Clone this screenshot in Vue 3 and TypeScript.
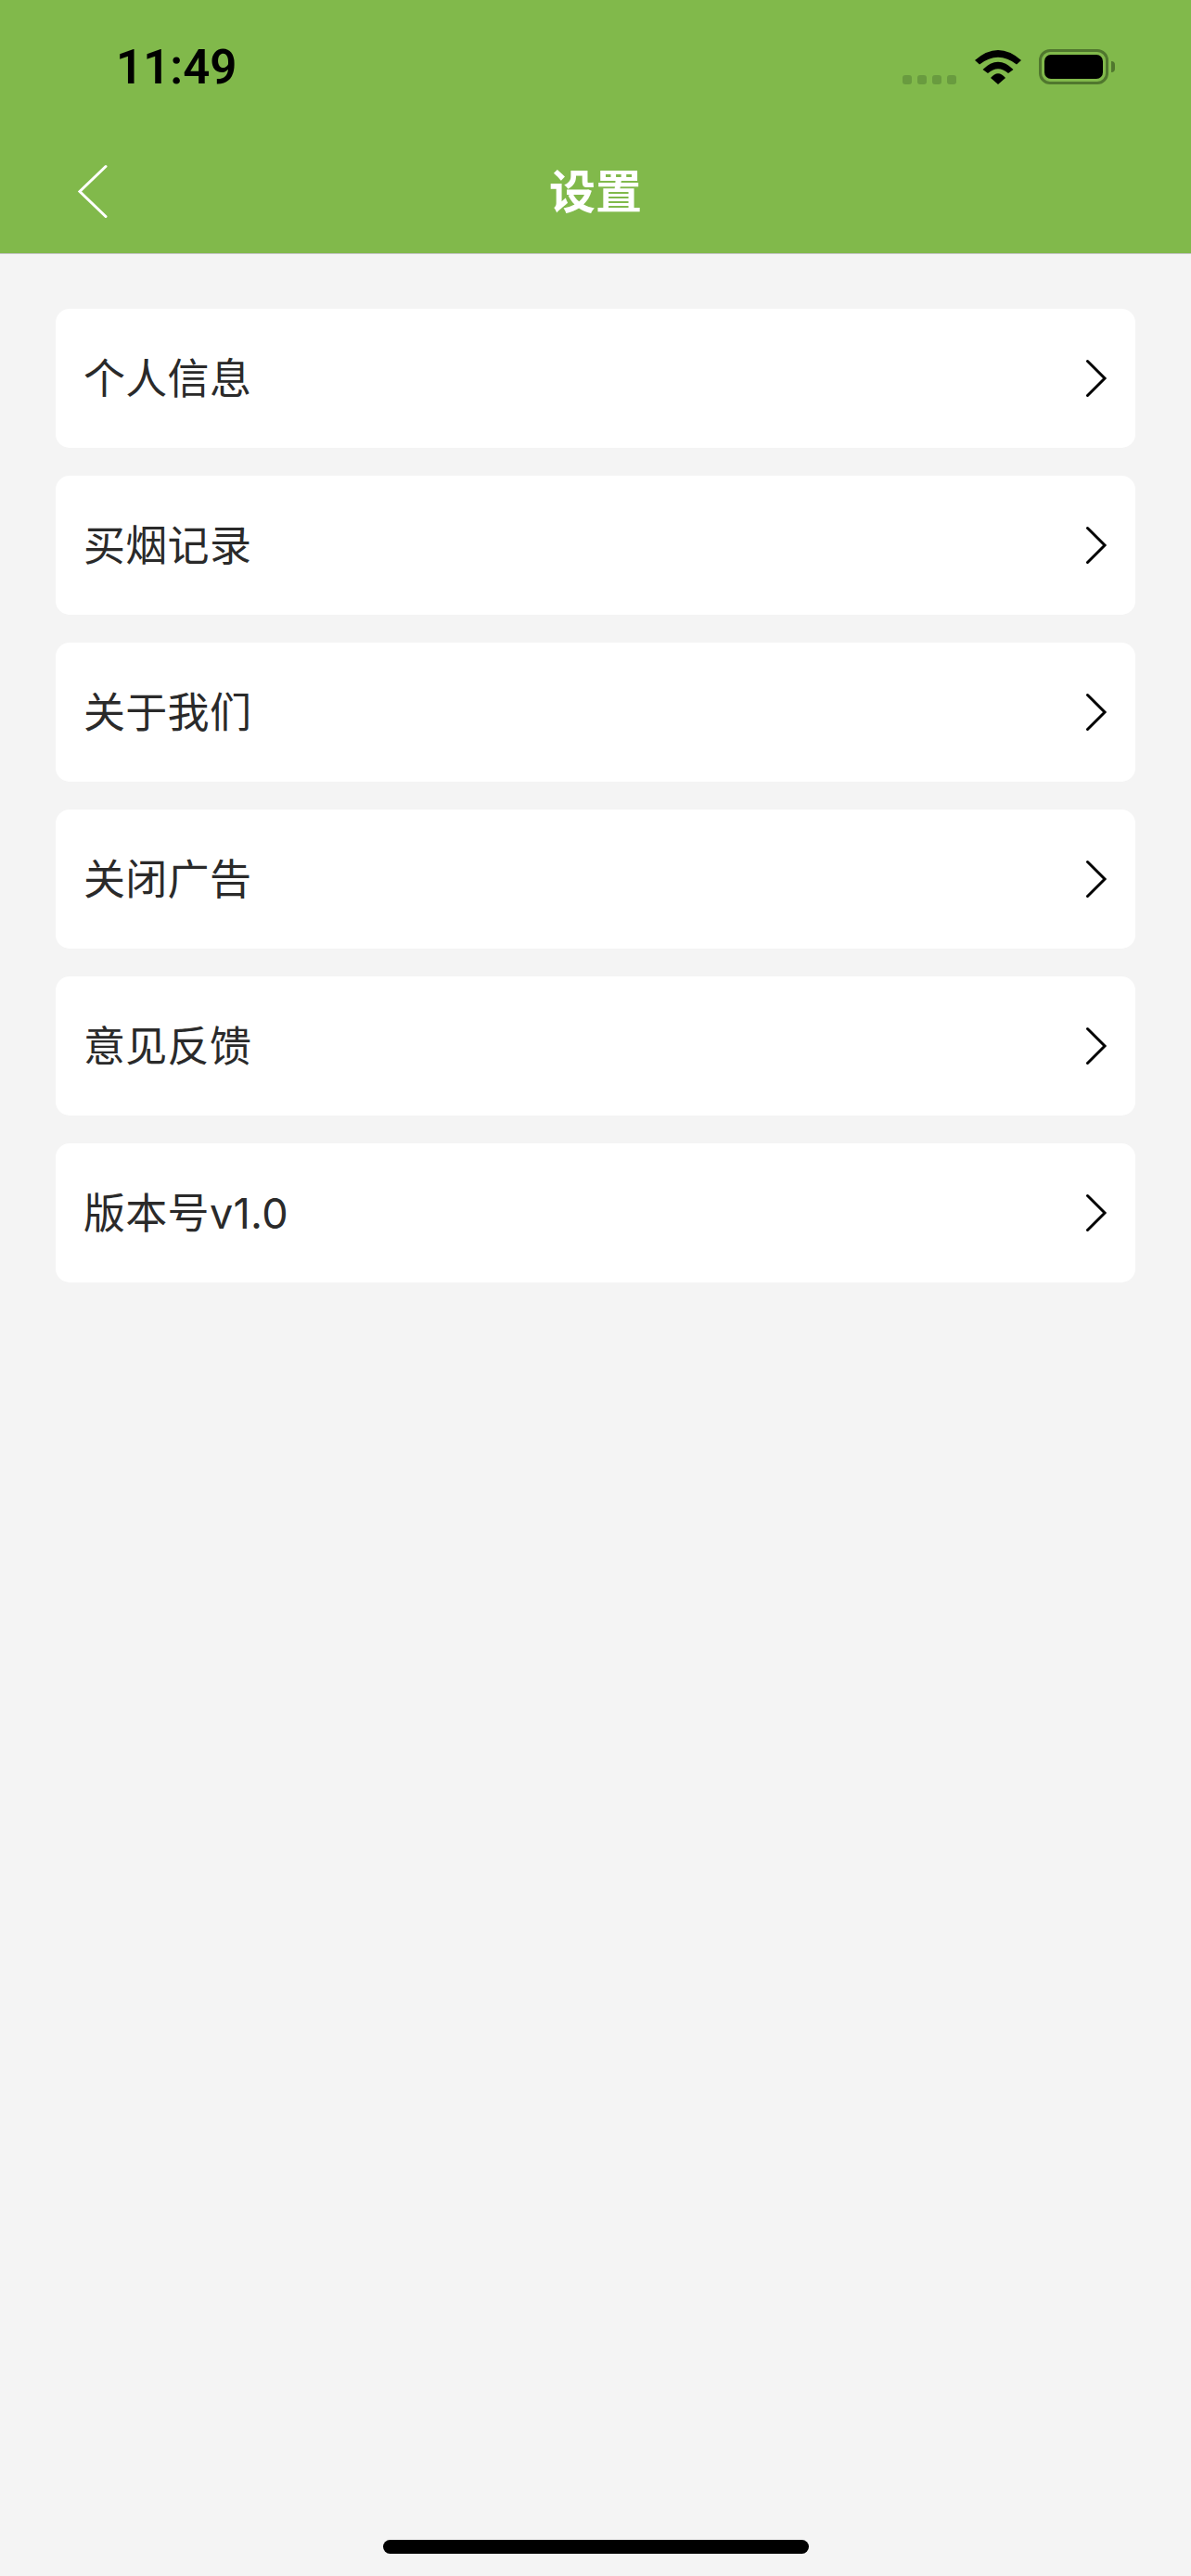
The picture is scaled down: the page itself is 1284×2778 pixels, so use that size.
<script setup lang="ts">
const items: string[] = ['个人信息', '买烟记录', '关于我们', '关闭广告', '意见反馈', '版本号v1.0']
</script>

<template>
  <div class="page">
    <header class="header">
      <div class="status-bar">
        <span class="time">11:49</span>
        <div class="status-icons">
          <div class="signal">
            <i v-for="n in 4" :key="n"></i>
          </div>
          <svg class="wifi" width="50" height="37" viewBox="0 0 50 37">
            <path d="M0 11Q25 -11 50 11L45 15.5Q25 0 5 15.5Z" />
            <path d="M8.5 21Q25 4.4 41.5 21L36 25Q25 15.6 14 25Z" />
            <path d="M17 30Q25 20.6 33 30L25 37Z" />
          </svg>
          <div class="battery">
            <div class="battery-body"><div class="battery-level"></div></div>
            <div class="battery-cap"></div>
          </div>
        </div>
      </div>
      <div class="nav-bar">
        <svg class="back" width="34" height="60" viewBox="0 0 34 60">
          <path d="M32 2.5L4 29.5L32 56.5" />
        </svg>
        <h1 class="title">设置</h1>
      </div>
    </header>

    <ul class="menu">
      <li v-for="item in items" :key="item" class="menu-item">
        <span class="label">{{ item }}</span>
        <svg class="arrow" width="24" height="42" viewBox="0 0 24 42">
          <path d="M1.5 2.5L20 21L1.5 39.5" />
        </svg>
      </li>
    </ul>

    <div class="home-bar"></div>
  </div>
</template>

<style scoped>
.page {
  min-height: 2778px;
  display: flex;
  flex-direction: column;
  background: #f4f4f4;
  font-family: Inter, "Noto Sans CJK SC", sans-serif;
}

.header {
  height: 273px;
  background: #81b94b;
  border-bottom: 1px solid #c4c4c4;
}

.status-bar {
  height: 146px;
  padding: 0 82px 0 125px;
  display: flex;
  justify-content: space-between;
}

.time {
  margin-top: 41px;
  font-family: Roboto, sans-serif;
  font-size: 51px;
  line-height: 64px;
  font-weight: 600;
  color: #000;
}

.status-icons {
  margin-top: 53px;
  height: 38px;
  display: flex;
  align-items: flex-end;
}

.signal {
  display: flex;
  gap: 6px;
}

.signal i {
  width: 10px;
  height: 10px;
  border-radius: 3px;
  background: #699b3f;
}

.wifi {
  margin-left: 20px;
  fill: #000;
}

.battery {
  margin-left: 19px;
  display: flex;
  align-items: center;
}

.battery-body {
  width: 75px;
  height: 38px;
  box-sizing: border-box;
  border: 3px solid #50772e;
  border-radius: 12px;
  padding: 3px;
}

.battery-level {
  height: 100%;
  background: #000;
  border-radius: 7px;
}

.battery-cap {
  width: 4px;
  height: 12px;
  margin-left: 3px;
  background: #50772e;
  border-radius: 0 6px 6px 0;
}

.nav-bar {
  position: relative;
  height: 127px;
  display: flex;
  justify-content: center;
}

.back {
  position: absolute;
  left: 82px;
  top: 31px;
  fill: none;
  stroke: #fff;
  stroke-width: 3;
  stroke-linecap: round;
}

.title {
  margin: 31px 0 0;
  font-size: 50px;
  line-height: 60px;
  font-weight: 700;
  color: #fff;
}

.menu {
  list-style: none;
  margin: 0;
  padding: 59px 60px 0;
  display: flex;
  flex-direction: column;
  gap: 30px;
}

.menu-item {
  height: 150px;
  box-sizing: border-box;
  padding: 0 29px 0 30px;
  display: flex;
  align-items: center;
  justify-content: space-between;
  background: #fff;
  border-radius: 15px;
  font-size: 45px;
  color: #2a2a2a;
}

.label {
  margin-bottom: 6px;
  letter-spacing: 0.3px;
}

.arrow {
  fill: none;
  stroke: #000;
  stroke-width: 3;
  stroke-linecap: round;
}

.home-bar {
  width: 459px;
  height: 15px;
  margin: auto auto 24px;
  border-radius: 8px;
  background: #000;
}
</style>

<style>
body {
  background: #f4f4f4;
}
</style>
